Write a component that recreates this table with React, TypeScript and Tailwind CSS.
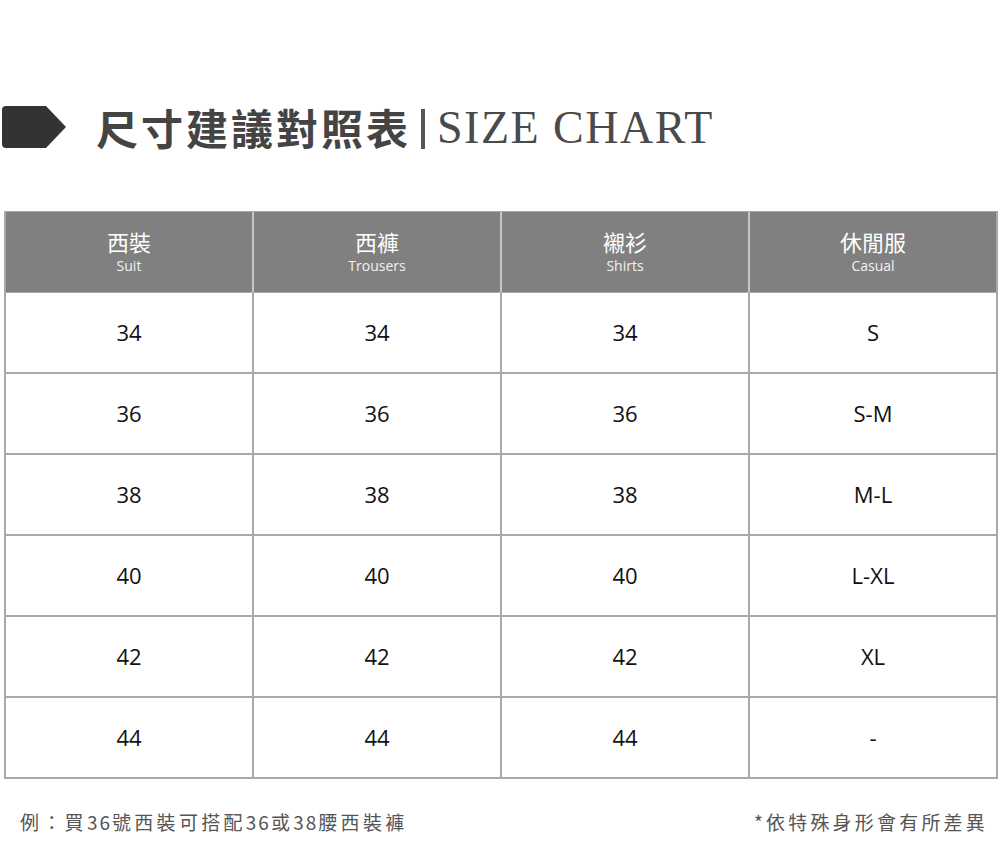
const headers = [
  { zh: "西裝", en: "Suit" },
  { zh: "西褲", en: "Trousers" },
  { zh: "襯衫", en: "Shirts" },
  { zh: "休閒服", en: "Casual" },
];

const rows = [
  ["34", "34", "34", "S"],
  ["36", "36", "36", "S-M"],
  ["38", "38", "38", "M-L"],
  ["40", "40", "40", "L-XL"],
  ["42", "42", "42", "XL"],
  ["44", "44", "44", "-"],
];

const cjk = { fontFamily: '"Open Sans", "Noto Sans CJK TC", sans-serif' };

// digits sit a bit tighter than the CJK glyphs in the note line
const Num = ({ children }: { children: string }) => (
  <span className="tracking-[2px]">{children}</span>
);

export default function App() {
  return (
    <div className="w-[1000px] h-[861px] bg-white overflow-hidden" style={cjk}>
      {/* Title */}
      <div className="flex items-center h-[46px] mt-[104px] pl-[2px]">
        <svg width="64" height="42" viewBox="0 0 64 42" className="shrink-0">
          <path d="M4 0 H44 L64 21 L44 42 H4 Q0 42 0 38 V4 Q0 0 4 0 Z" fill="#333333" />
        </svg>
        <span
          className="ml-[30px] text-[42px] font-bold text-[#444] tracking-[3px] leading-none"
          style={{ fontFamily: '"Noto Sans CJK TC", sans-serif' }}
        >
          尺寸建議對照表
        </span>
        <span className="ml-[10px] w-[4px] h-[40px] bg-[#555] mt-[4px]" />
        <span
          className="ml-[12px] text-[46px] text-[#4a4a4a] leading-none tracking-[1.5px] mt-[2px]"
          style={{ fontFamily: '"Liberation Serif", serif' }}
        >
          SIZE CHART
        </span>
      </div>

      {/* Table */}
      <div className="ml-[4px] mt-[61px] w-[994px] border-l-2 border-t border-[#a9a9a9]">
        <div className="grid grid-cols-4 h-[81px] bg-[#808080]">
          {headers.map((h, i) => (
            <div
              key={h.en}
              className={`flex flex-col items-center justify-center text-white border-b border-[#a9a9a9] ${i < 3 ? "border-r-2 border-r-[#c4c4c4]" : "border-r-2 border-r-[#a9a9a9]"}`}
            >
              <span className="text-[22px] leading-[28px]">{h.zh}</span>
              <span className="text-[14px] leading-[20px] text-[#f2f2f2]">{h.en}</span>
            </div>
          ))}
        </div>
        {rows.map((r, ri) => (
          <div key={ri} className="grid grid-cols-4 h-[81px]">
            {r.map((v, ci) => (
              <div
                key={ci}
                className="flex items-center justify-center border-r-2 border-b-2 border-[#a9a9a9] text-[22px] text-[#111]"
              >
                {v}
              </div>
            ))}
          </div>
        ))}
      </div>

      {/* Notes */}
      <div
        className="flex justify-between items-center mt-[29px] pl-[20px] pr-[12px] text-[19px] text-[#555] tracking-[3.3px]"
        style={{ fontFamily: '"Noto Sans CJK TC", sans-serif' }}
      >
        <span>
          例：買<Num>36</Num>號西裝可搭配<Num>36</Num>或<Num>38</Num>腰西裝褲
        </span>
        <span className="tracking-[3.2px]">*依特殊身形會有所差異</span>
      </div>
    </div>
  );
}
